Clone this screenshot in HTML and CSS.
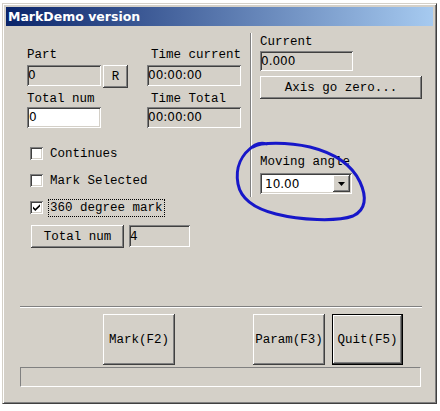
FILE: index.html
```html
<!DOCTYPE html>
<html lang="en">
<head>
    <meta charset="UTF-8">
    <title>MarkDemo version</title>
    <link rel="stylesheet" href="styles.css">
</head>
<body>
    <div class="window">
        <div class="titlebar">MarkDemo version</div>
        <div class="client">
            <div class="top">
                <div class="left">
                    <div class="counters">
                        <span class="lbl">Part</span>
                        <span></span>
                        <span class="lbl time">Time current</span>
                        <div class="field readonly">0</div>
                        <button class="btn reset">R</button>
                        <div class="field readonly">00:00:00</div>
                        <span class="lbl">Total num</span>
                        <span></span>
                        <span class="lbl time">Time Total</span>
                        <div class="field edit">0</div>
                        <span></span>
                        <div class="field readonly">00:00:00</div>
                    </div>

                    <div class="options">
                        <label class="check"><span class="box"></span><span class="caption">Continues</span></label>
                        <label class="check"><span class="box"></span><span class="caption">Mark Selected</span></label>
                        <label class="check"><span class="box">
                            <svg width="9" height="9" viewBox="0 0 9 9"><path d="M1 3.5 L3.3 5.8 L8 1.2 L8 3.4 L3.3 8 L1 5.7 Z" fill="#000"/></svg>
                        </span><span class="caption focused">360 degree mark</span></label>
                    </div>

                    <div class="total-row">
                        <button class="btn total">Total num</button>
                        <div class="field readonly count">4</div>
                    </div>
                </div>

                <div class="vsep"></div>

                <div class="right">
                    <span class="lbl">Current</span>
                    <div class="field readonly current">0.000</div>
                    <button class="btn axis">Axis go zero...</button>
                    <span class="lbl angle-lbl">Moving angle</span>
                    <div class="combo">
                        <span class="combo-value">10.00</span>
                        <span class="combo-arrow">
                            <svg width="7" height="4" viewBox="0 0 7 4"><path d="M0 0 H7 L3.5 4 Z" fill="#000"/></svg>
                        </span>
                    </div>
                </div>
            </div>

            <div class="hsep"></div>

            <div class="actions">
                <button class="btn big mark">Mark(F2)</button>
                <button class="btn big param">Param(F3)</button>
                <button class="btn big quit">Quit(F5)</button>
            </div>

            <div class="status"></div>
        </div>
    </div>

    <!-- pen circle drawn over the angle box -->
    <svg class="pen" width="440" height="411" viewBox="0 0 440 411">
        <path d="M253 147 C260 142 288 142 310 147 C334 153 352 165 360 182 C367 197 366 210 353 216 C336 222 300 220 276 214 C256 209 241 200 238 184 C235 168 241 154 255 145 C259 143 263 143 267 144"
              fill="none" stroke="#1717c9" stroke-width="3" stroke-linecap="round"/>
    </svg>
</body>
</html>
```

FILE: styles.css
```css
body {
    margin: 0;
    width: 440px;
    height: 411px;
    overflow: hidden;
    background: #ffffff;
    position: relative;
    font-family: "Liberation Mono", "Courier New", monospace;
    font-size: 12.5px;
    color: #000000;
}

/* classic dialog frame */
.window {
    margin: 3px 0 0 2px;
    width: 435px;
    height: 401px;
    box-sizing: border-box;
    background: #d4d0c8;
    border: 1px solid;
    border-color: #d4d0c8 #404040 #404040 #d4d0c8;
    box-shadow: inset 1px 1px #ffffff, inset -1px -1px #808080;
    padding: 3px;
}

.titlebar {
    height: 19px;
    line-height: 19px;
    padding-left: 2px;
    margin-bottom: 1px;
    background: linear-gradient(to right, #0a246a, #a6caf0);
    color: #ffffff;
    font-family: "DejaVu Sans", Verdana, sans-serif;
    font-weight: bold;
    font-size: 12.5px;
}

.client {
    padding: 6px 0 0 14px;
}

.top {
    display: flex;
    height: 273px;
}

.lbl {
    display: block;
    line-height: 14px;
    height: 14px;
    white-space: nowrap;
}

/* sunken text fields */
.field {
    box-sizing: border-box;
    height: 21px;
    line-height: 21px;
    padding-left: 2px;
    font-family: "DejaVu Sans", sans-serif;
    font-size: 12px;
    white-space: nowrap;
    overflow: hidden;
    box-shadow: inset 1px 1px #808080, inset -1px -1px #ffffff, inset 2px 2px #404040, inset -2px -2px #d4d0c8;
}
.field.readonly {
    background: #d4d0c8;
    padding-left: 1px;
}
.field.edit {
    background: #ffffff;
}

/* raised push buttons */
.btn {
    box-sizing: border-box;
    padding: 0;
    margin: 0;
    border: none;
    background: #d4d0c8;
    font-family: "Liberation Mono", "Courier New", monospace;
    font-size: 12.5px;
    color: #000000;
    box-shadow: inset -1px -1px #404040, inset 1px 1px #ffffff, inset -2px -2px #808080, inset 2px 2px #d4d0c8;
}

/* left column */
.left {
    width: 230px;
    padding-left: 7px;
    padding-top: 15px;
    box-sizing: border-box;
}

.counters {
    display: grid;
    grid-template-columns: 76px 44px 96px;
    grid-template-rows: 17px 27px 15px 21px;
    align-items: start;
}
.counters .field {
    width: 74px;
}
.counters .field.readonly:nth-child(6),
.counters .field.readonly:nth-child(12) {
    width: 94px;
}
.counters .time {
    padding-left: 4px;
}
.counters .reset {
    width: 25px;
    height: 23px;
}

.options {
    margin-top: 12px;
}
.check {
    display: flex;
    align-items: center;
    height: 27px;
    padding-left: 3px;
}
.box {
    width: 13px;
    height: 13px;
    box-sizing: border-box;
    background: #ffffff;
    box-shadow: inset 1px 1px #808080, inset -1px -1px #ffffff, inset 2px 2px #404040, inset -2px -2px #d4d0c8;
    display: flex;
    align-items: center;
    justify-content: center;
    margin-right: 6px;
}
.caption {
    padding: 1px 1px;
    line-height: 14px;
}
.caption.focused {
    outline: 1px dotted #000000;
}

.total-row {
    display: flex;
    margin-top: 4px;
    padding-left: 4px;
}
.total {
    width: 93px;
    height: 23px;
}
.count {
    width: 61px;
    height: 22px;
    line-height: 22px;
    margin-left: 5px;
    padding-left: 2px;
}

.vsep {
    width: 0;
    height: 164px;
    border-left: 1px solid #808080;
    border-right: 1px solid #ffffff;
}

/* right column */
.right {
    width: 162px;
    margin-left: 8px;
    padding-top: 2px;
}
.current {
    width: 93px;
    height: 20px;
    line-height: 20px;
    margin-top: 2px;
}
.axis {
    display: block;
    width: 162px;
    height: 23px;
    margin-top: 5px;
}
.angle-lbl {
    margin-top: 56px;
}

.combo {
    margin-top: 4px;
    width: 92px;
    height: 21px;
    box-sizing: border-box;
    background: #ffffff;
    box-shadow: inset 1px 1px #808080, inset -1px -1px #ffffff, inset 2px 2px #404040, inset -2px -2px #d4d0c8;
    display: flex;
    align-items: center;
    padding: 2px;
}
.combo-value {
    flex: 1;
    padding-left: 3px;
    font-family: "DejaVu Sans", sans-serif;
    font-size: 12px;
}
.combo-arrow {
    width: 17px;
    height: 17px;
    background: #d4d0c8;
    box-shadow: inset -1px -1px #404040, inset 1px 1px #ffffff, inset -2px -2px #808080, inset 2px 2px #d4d0c8;
    display: flex;
    align-items: center;
    justify-content: center;
}

.hsep {
    width: 402px;
    height: 0;
    border-top: 1px solid #808080;
    border-bottom: 1px solid #ffffff;
}

.actions {
    display: flex;
    margin-top: 6px;
}
.big {
    height: 51px;
    width: 72px;
}
.mark {
    margin-left: 83px;
}
.param {
    margin-left: 78px;
}
.quit {
    margin-left: 7px;
    width: 71px;
    border: 1px solid #000000;
}

.status {
    margin-top: 2px;
    width: 401px;
    height: 20px;
    box-sizing: border-box;
    border: 1px solid;
    border-color: #808080 #ffffff #ffffff #808080;
}

.pen {
    position: absolute;
    top: 0;
    left: 0;
    pointer-events: none;
}
```
